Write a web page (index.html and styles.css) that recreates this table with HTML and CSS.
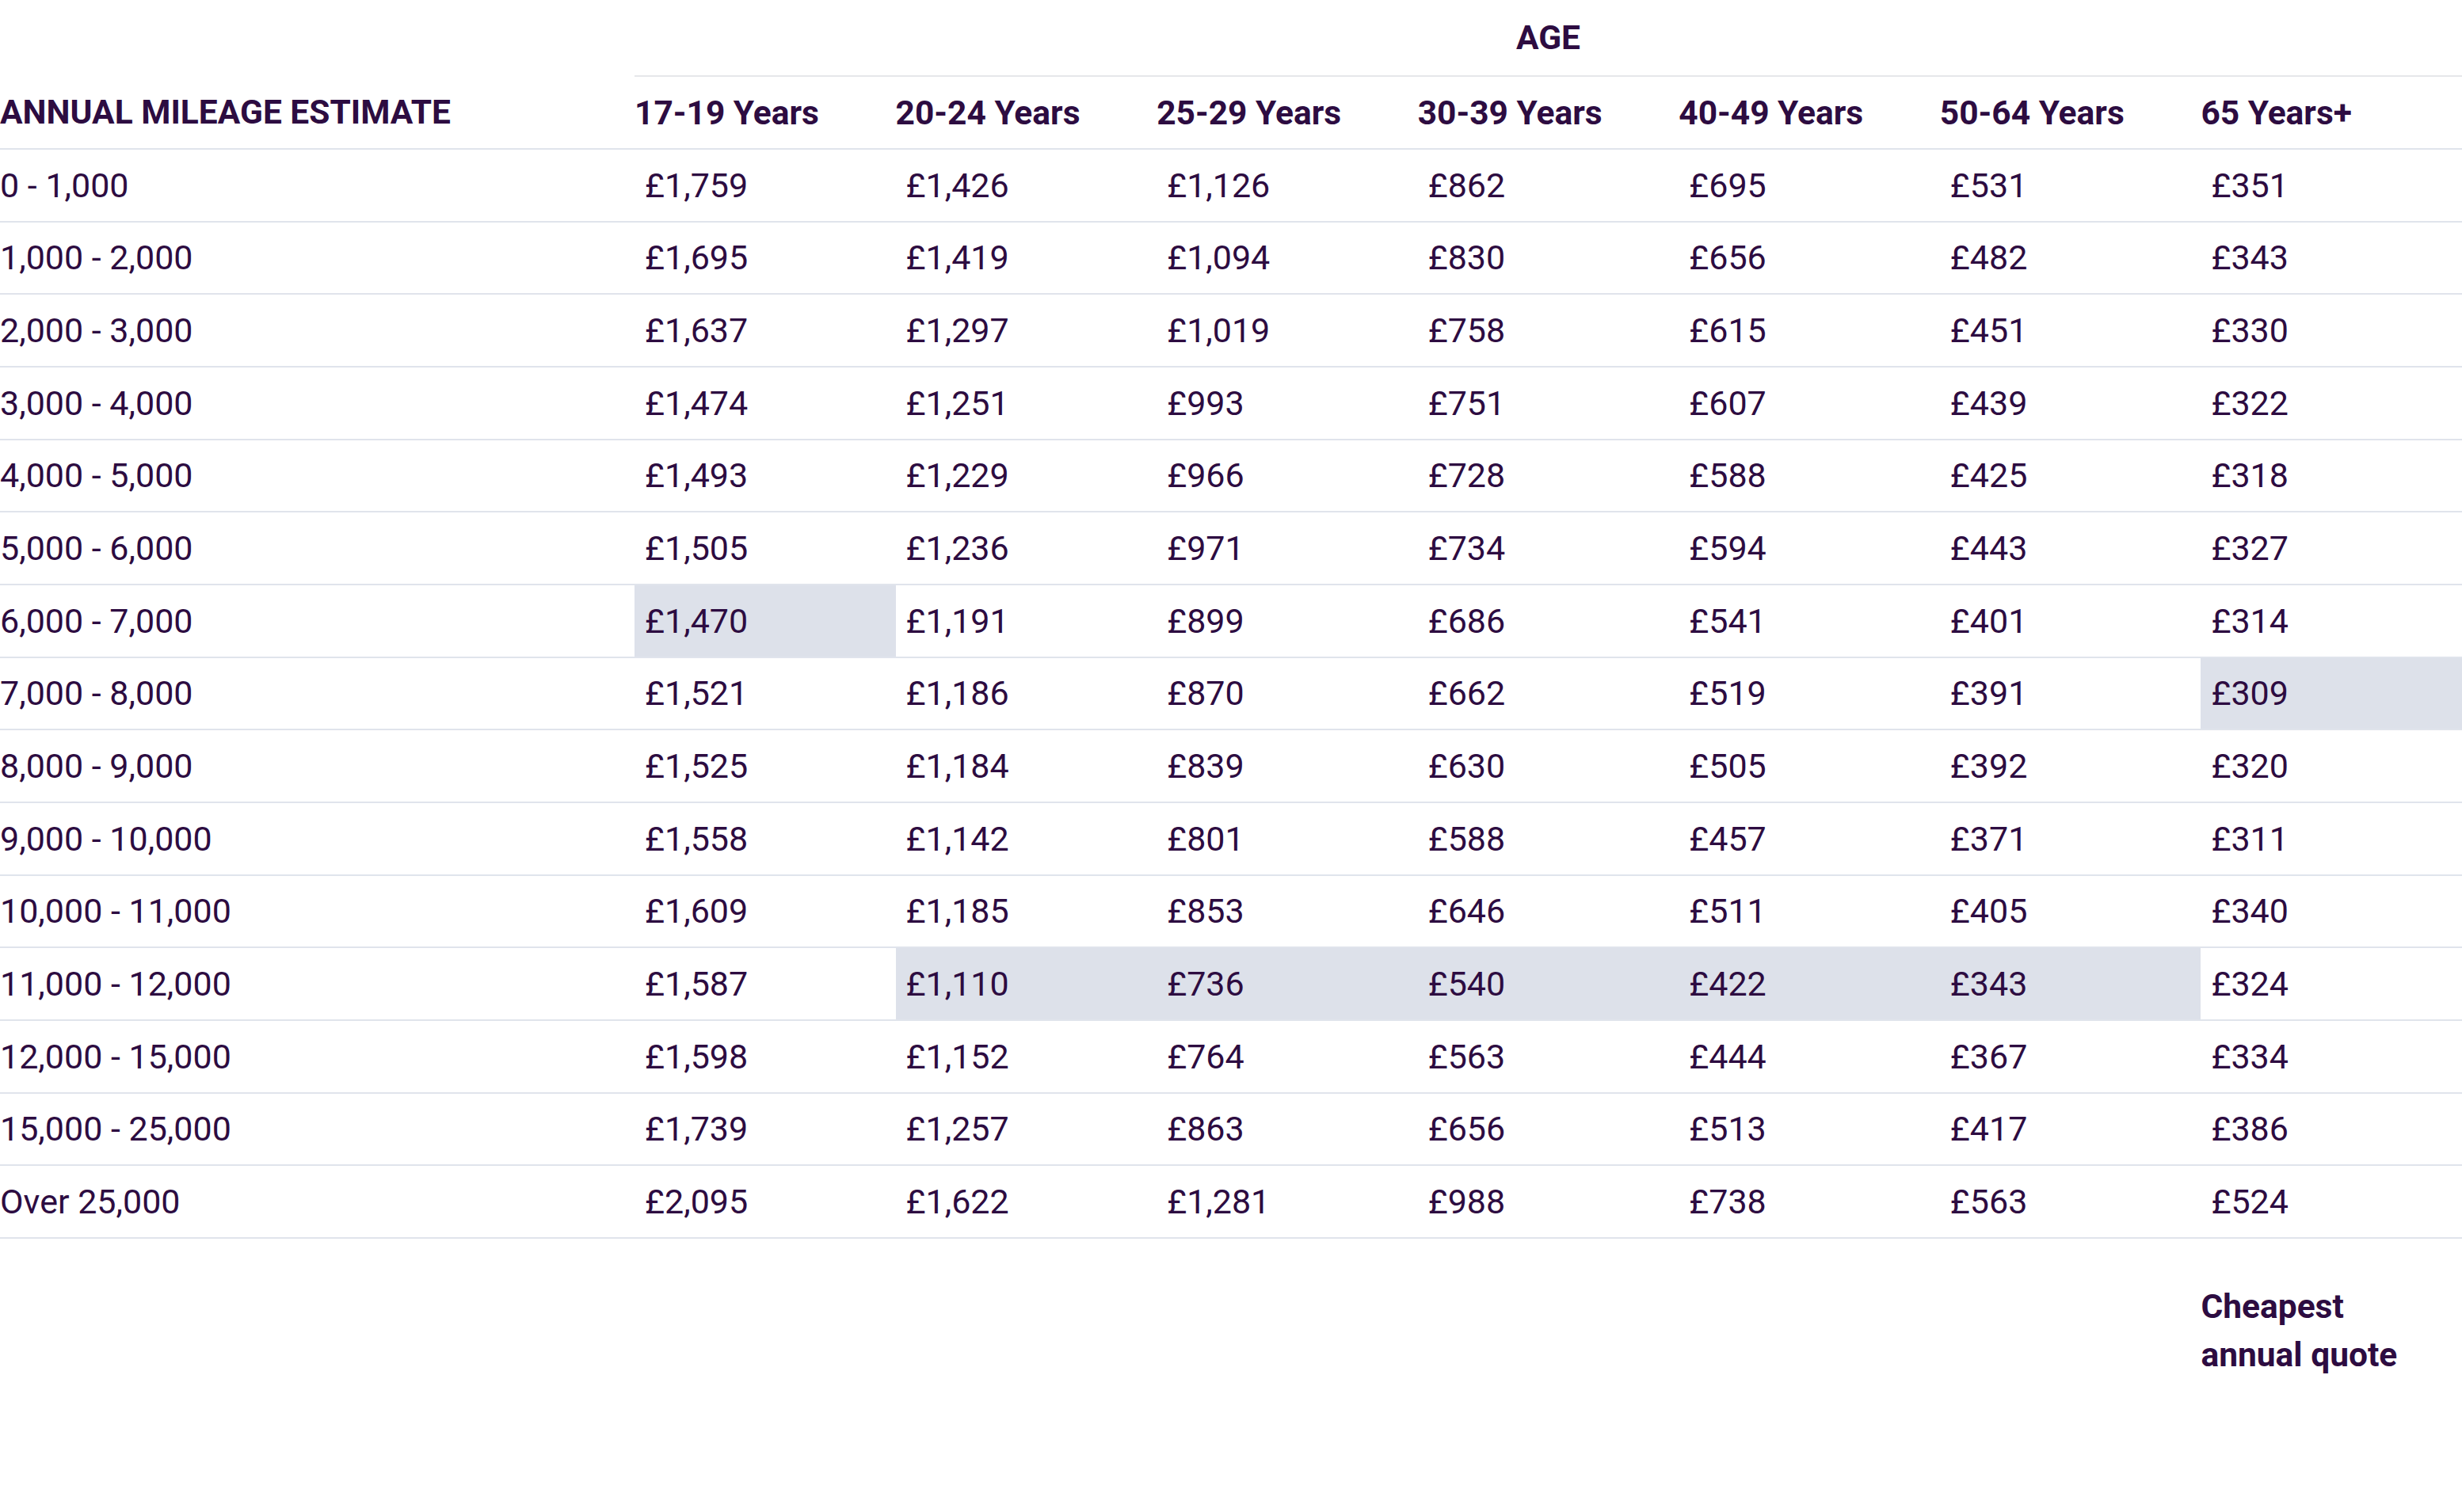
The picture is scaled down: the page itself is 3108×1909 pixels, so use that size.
FILE: index.html
```html
<!DOCTYPE html>
<html lang="en">
<head>
<meta charset="utf-8">
<title>Annual mileage estimate by age</title>
<link rel="stylesheet" href="styles.css">
</head>
<body>
<div class="wrap">
<table class="quotes">
  <colgroup>
    <col class="col-mileage">
    <col><col><col><col><col><col><col>
  </colgroup>
  <thead>
    <tr class="group-row">
      <th class="blank"></th>
      <th class="group" colspan="7">AGE</th>
    </tr>
    <tr class="head-row">
      <th class="first">ANNUAL MILEAGE ESTIMATE</th>
      <th>17-19 Years</th>
      <th>20-24 Years</th>
      <th>25-29 Years</th>
      <th>30-39 Years</th>
      <th>40-49 Years</th>
      <th>50-64 Years</th>
      <th>65 Years+</th>
    </tr>
  </thead>
  <tbody>
    <tr><td class="first">0 - 1,000</td><td>£1,759</td><td>£1,426</td><td>£1,126</td><td>£862</td><td>£695</td><td>£531</td><td>£351</td></tr>
    <tr><td class="first">1,000 - 2,000</td><td>£1,695</td><td>£1,419</td><td>£1,094</td><td>£830</td><td>£656</td><td>£482</td><td>£343</td></tr>
    <tr><td class="first">2,000 - 3,000</td><td>£1,637</td><td>£1,297</td><td>£1,019</td><td>£758</td><td>£615</td><td>£451</td><td>£330</td></tr>
    <tr><td class="first">3,000 - 4,000</td><td>£1,474</td><td>£1,251</td><td>£993</td><td>£751</td><td>£607</td><td>£439</td><td>£322</td></tr>
    <tr><td class="first">4,000 - 5,000</td><td>£1,493</td><td>£1,229</td><td>£966</td><td>£728</td><td>£588</td><td>£425</td><td>£318</td></tr>
    <tr><td class="first">5,000 - 6,000</td><td>£1,505</td><td>£1,236</td><td>£971</td><td>£734</td><td>£594</td><td>£443</td><td>£327</td></tr>
    <tr><td class="first">6,000 - 7,000</td><td class="cheap">£1,470</td><td>£1,191</td><td>£899</td><td>£686</td><td>£541</td><td>£401</td><td>£314</td></tr>
    <tr><td class="first">7,000 - 8,000</td><td>£1,521</td><td>£1,186</td><td>£870</td><td>£662</td><td>£519</td><td>£391</td><td class="cheap">£309</td></tr>
    <tr><td class="first">8,000 - 9,000</td><td>£1,525</td><td>£1,184</td><td>£839</td><td>£630</td><td>£505</td><td>£392</td><td>£320</td></tr>
    <tr><td class="first">9,000 - 10,000</td><td>£1,558</td><td>£1,142</td><td>£801</td><td>£588</td><td>£457</td><td>£371</td><td>£311</td></tr>
    <tr><td class="first">10,000 - 11,000</td><td>£1,609</td><td>£1,185</td><td>£853</td><td>£646</td><td>£511</td><td>£405</td><td>£340</td></tr>
    <tr><td class="first">11,000 - 12,000</td><td>£1,587</td><td class="cheap">£1,110</td><td class="cheap">£736</td><td class="cheap">£540</td><td class="cheap">£422</td><td class="cheap">£343</td><td>£324</td></tr>
    <tr><td class="first">12,000 - 15,000</td><td>£1,598</td><td>£1,152</td><td>£764</td><td>£563</td><td>£444</td><td>£367</td><td>£334</td></tr>
    <tr><td class="first">15,000 - 25,000</td><td>£1,739</td><td>£1,257</td><td>£863</td><td>£656</td><td>£513</td><td>£417</td><td>£386</td></tr>
    <tr><td class="first">Over 25,000</td><td>£2,095</td><td>£1,622</td><td>£1,281</td><td>£988</td><td>£738</td><td>£563</td><td>£524</td></tr>
  </tbody>
</table>
<div class="legend">
  <p class="legend-text">Cheapest<br>annual quote</p>
</div>
</div>
</body>
</html>
```

FILE: styles.css
```css
html, body {
  margin: 0;
  padding: 0;
  background: #ffffff;
}

body {
  font-family: Roboto, "Liberation Sans", Arial, sans-serif;
  color: #2d0c41;
}

.wrap {
  width: 3108px;
}

.quotes {
  width: 100%;
  border-collapse: collapse;
  table-layout: fixed;
  font-size: 43px;
}

.col-mileage {
  width: 801px;
}

.quotes th {
  font-size: 42.5px;
  font-weight: 700;
  text-align: left;
  padding: 0;
  vertical-align: middle;
}

.group-row th {
  height: 95px;
}

.group-row .group {
  text-align: center;
  border-bottom: 2px solid #e6e7ea;
}

.head-row th {
  height: 90px;
  border-bottom: 2px solid #e0e4ec;
}

.quotes td {
  height: 89.67px;
  padding: 0 0 0 13px;
  font-weight: 400;
  vertical-align: middle;
  border-bottom: 2px solid #e0e4ec;
  white-space: nowrap;
}

.quotes td.first {
  padding-left: 0;
}

.quotes td.cheap {
  background: #dde1ea;
}

.legend {
  display: grid;
  grid-template-columns: 801px repeat(7, 1fr);
  padding-top: 55px;
}

.legend-text {
  grid-column: 8;
  margin: 0;
  font-size: 42.5px;
  font-weight: 700;
  line-height: 61px;
}
```
